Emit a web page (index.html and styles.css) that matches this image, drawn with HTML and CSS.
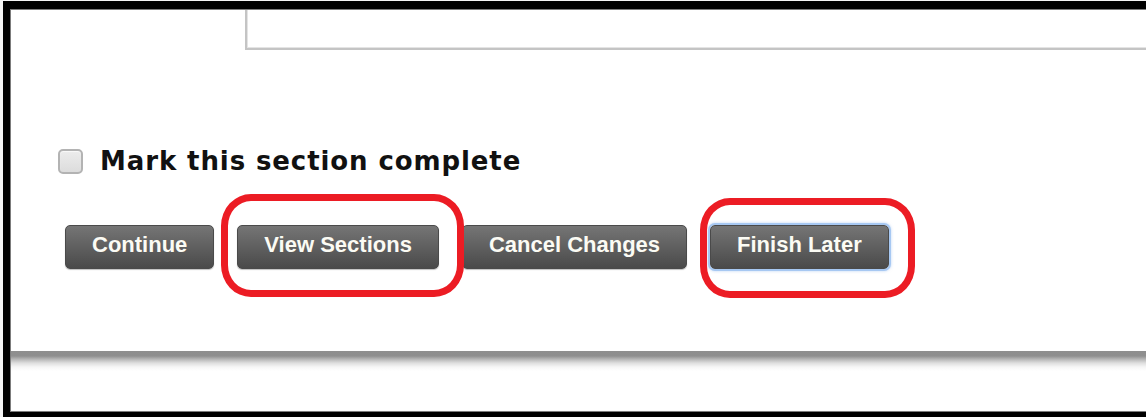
FILE: index.html
```html
<!DOCTYPE html>
<html lang="en">
<head>
<meta charset="utf-8">
<title>Section</title>
<link rel="stylesheet" href="styles.css">
</head>
<body>
<div class="screen">
  <div class="frame">
    <div class="canvas">
      <div class="editor-box"></div>

      <label class="complete-row">
        <input type="checkbox" class="complete-check">
        <span class="complete-label">Mark this section complete</span>
      </label>

      <div class="actions">
        <button class="btn" type="button">Continue</button>
        <span class="callout callout-view">
          <button class="btn" type="button">View Sections</button>
        </span>
        <button class="btn" type="button">Cancel Changes</button>
        <span class="callout callout-later">
          <button class="btn btn-focus" type="button">Finish Later</button>
        </span>
      </div>

      <div class="page-edge"></div>
    </div>
  </div>
</div>
</body>
</html>
```

FILE: styles.css
```css
html, body {
  margin: 0;
  padding: 0;
  background: #fff;
}

.screen {
  width: 1146px;
  height: 417px;
  box-sizing: border-box;
  padding: 1px 0 0 3px;
  background: #f4f4f4;
  overflow: hidden;
}

.frame {
  height: 416px;
  box-sizing: border-box;
  border-top: 8px solid #000;
  border-left: 7px solid #000;
  border-bottom: 5px solid #000;
  overflow: hidden;
}

.canvas {
  height: 100%;
  box-sizing: border-box;
  border-top: 1px solid #7c7c7c;
  border-left: 1px solid #7c7c7c;
  border-bottom: 1px solid #7c7c7c;
  background: #fff;
  display: flex;
  flex-direction: column;
  align-items: flex-start;
}

/* bottom edge of the text area above the form footer */
.editor-box {
  margin-left: 234px;
  width: 1000px;
  height: 38px;
  flex: none;
  border-left: 2px solid #c4c4c4;
  border-bottom: 2px solid #c4c4c4;
  box-shadow: inset 1px -1px 0 #e4e4e4;
}

.complete-row {
  margin: 96px 0 0 47px;
  display: flex;
  align-items: center;
  gap: 17px;
  cursor: pointer;
}

.complete-check {
  appearance: none;
  -webkit-appearance: none;
  margin: 0;
  width: 25px;
  height: 25px;
  box-sizing: border-box;
  border: 2px solid #b3b3b3;
  border-radius: 5px;
  background: linear-gradient(#ececec, #dcdcdc);
  box-shadow: inset 0 1px 1px rgba(255, 255, 255, 0.7);
}

.complete-label {
  font-family: "DejaVu Sans", Verdana, sans-serif;
  font-weight: bold;
  font-size: 26px;
  line-height: 30px;
  letter-spacing: 0.9px;
  color: #111;
}

.actions {
  margin: 49px 0 0 54px;
  display: flex;
  gap: 23px;
}

.btn {
  height: 44px;
  box-sizing: border-box;
  padding: 0 26px 4px;
  border: 1px solid #4a4a4a;
  border-radius: 5px;
  background: linear-gradient(#757575, #4a4a4a);
  color: #fbfbf4;
  font-family: "Liberation Sans", Arial, sans-serif;
  font-weight: bold;
  font-size: 22px;
  white-space: nowrap;
  box-shadow: 0 1px 1px rgba(0, 0, 0, 0.25);
  cursor: pointer;
}

.btn-focus {
  box-shadow: 0 0 0 2px #a7c8f2, 0 0 3px 2px rgba(120, 170, 235, 0.5);
}

/* red hand-drawn call-out rings around selected buttons */
.callout {
  position: relative;
  display: flex;
}

.callout::after {
  content: "";
  position: absolute;
  border: 7px solid #ec1c24;
  border-radius: 30px / 32px;
  pointer-events: none;
}

.callout-view::after {
  left: -16px;
  right: -25px;
  top: -31px;
  bottom: -28px;
}

.callout-later::after {
  left: -10px;
  right: -26px;
  top: -27px;
  bottom: -29px;
}

/* lower edge of the page card */
.page-edge {
  margin-top: 82px;
  width: 100%;
  height: 20px;
  flex: none;
  background: linear-gradient(#8e8e8e 0, #8f8f8f 5px, #b4b4b4 8px, #dedede 12px, #f6f6f6 16px, #fff 20px);
}
```
